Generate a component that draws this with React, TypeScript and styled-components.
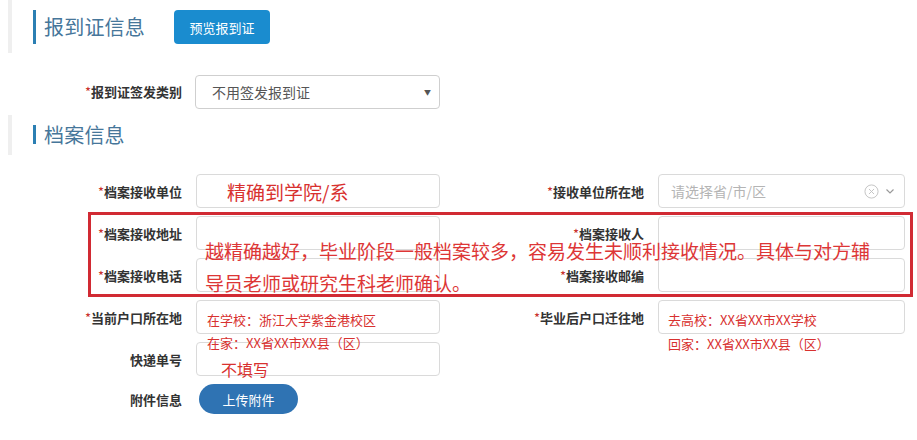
import React from "react";
import styled, { createGlobalStyle } from "styled-components";

const GlobalStyle = createGlobalStyle`
  html, body { margin: 0; padding: 0; background: #fff; }
  * { box-sizing: border-box; }
`;

const FONT = `"Noto Sans CJK SC", "Noto Sans", "Liberation Sans", sans-serif`;

const Page = styled.div`
  width: 917px;
  height: 440px;
  overflow: hidden;
  background: #fff;
  font-family: ${FONT};
  position: relative;
`;

const SectionHeader = styled.div<{ $pt: number; $pb: number; $mt?: number }>`
  margin-left: 8px;
  margin-top: ${(p) => p.$mt ?? 0}px;
  border-left: 4px solid #efefef;
  padding: ${(p) => p.$pt}px 0 ${(p) => p.$pb}px 21px;
`;

const TitleBar = styled.div<{ $h: number }>`
  display: flex;
  align-items: center;
  height: ${(p) => p.$h}px;
  border-left: 3px solid #2b7fb3;
  padding-left: 8px;
  gap: 29px;
`;

const Title = styled.h2`
  margin: 0;
  font-size: 20px;
  line-height: 20px;
  font-weight: 400;
  color: #46769a;
  letter-spacing: 0.2px;
`;

const PrimaryButton = styled.button`
  width: 96px;
  height: 34px;
  border: none;
  border-radius: 4px;
  background: #1a8ccf;
  color: #fff;
  font-family: ${FONT};
  font-size: 13px;
  padding: 0;
`;

const Row = styled.div<{ $mt: number; $h?: number }>`
  display: flex;
  align-items: center;
  height: ${(p) => p.$h ?? 34}px;
  margin-top: ${(p) => p.$mt}px;
`;

const Field = styled.div`
  display: flex;
  align-items: center;
  height: 100%;
`;

const Label = styled.label<{ $w: number }>`
  width: ${(p) => p.$w}px;
  flex-shrink: 0;
  text-align: right;
  font-size: 13px;
  font-weight: 700;
  color: #333;
  white-space: nowrap;
`;

const Star = styled.span`
  color: #c9302c;
  font-weight: 400;
`;

const InputBox = styled.div<{ $w: number; $ml: number }>`
  position: relative;
  width: ${(p) => p.$w}px;
  height: 34px;
  margin-left: ${(p) => p.$ml}px;
  border: 1px solid #dadada;
  border-radius: 4px;
  background: #fff;
  display: flex;
  align-items: center;
  padding: 0 12px;
`;

const SelectBox = styled(InputBox)`
  border-color: #cfcfcf;
  padding: 0 8px 0 16px;
  justify-content: space-between;
  font-size: 14px;
  color: #555;
`;

const Caret = styled.span`
  font-size: 7px;
  color: #555;
`;

const Placeholder = styled.span`
  font-size: 14px;
  color: #b4b4b4;
  flex: 1;
`;

const IconGroup = styled.div`
  display: flex;
  align-items: center;
  gap: 6px;
  margin-right: -3px;
`;

const NoteText = styled.span<{ $size: number }>`
  font-size: ${(p) => p.$size}px;
  color: #d8312f;
  white-space: nowrap;
  line-height: 1;
`;

const BelowNote = styled(NoteText)<{ $left: number; $top: number }>`
  position: absolute;
  left: ${(p) => p.$left}px;
  top: ${(p) => p.$top}px;
  z-index: 3;
`;

const Form = styled.div`
  position: relative;
`;

const AnnotationBox = styled.div`
  position: absolute;
  left: 88px;
  top: 38px;
  width: 825px;
  height: 85px;
  border: 3px solid #d12a33;
  pointer-events: none;
  z-index: 4;
`;

const AnnotationText = styled.div`
  position: absolute;
  left: 205px;
  top: 61px;
  font-size: 19px;
  line-height: 32px;
  color: #dd3636;
  white-space: nowrap;
  pointer-events: none;
  z-index: 4;
`;

const UploadButton = styled.button`
  width: 99px;
  height: 30px;
  margin-left: 17px;
  border: none;
  border-radius: 15px;
  background: #2f73b3;
  color: #fff;
  font-family: ${FONT};
  font-size: 13px;
  padding: 0;
`;

const LEFT_LABEL = 182;
const LEFT_GAP = 14;
const LEFT_W = 244;
const RIGHT_LABEL = 204;
const RIGHT_GAP = 14;
const RIGHT_W = 247;

const Req: React.FC<{ text: string; req?: boolean }> = ({ text, req = true }) => (
  <>
    {req && <Star>*</Star>}
    {text}
  </>
);

const LeftField: React.FC<{ label: string; req?: boolean; children?: React.ReactNode }> = ({
  label,
  req,
  children,
}) => (
  <Field>
    <Label $w={LEFT_LABEL}>
      <Req text={label} req={req} />
    </Label>
    <InputBox $w={LEFT_W} $ml={LEFT_GAP}>{children}</InputBox>
  </Field>
);

const RightField: React.FC<{ label: string; req?: boolean; children?: React.ReactNode }> = ({
  label,
  req,
  children,
}) => (
  <Field>
    <Label $w={RIGHT_LABEL}>
      <Req text={label} req={req} />
    </Label>
    <InputBox $w={RIGHT_W} $ml={RIGHT_GAP}>{children}</InputBox>
  </Field>
);

const ClearIcon = () => (
  <svg width="15" height="15" viewBox="0 0 16 16" fill="none" stroke="#c2c2c2" strokeWidth="1">
    <circle cx="8" cy="8" r="7" />
    <path d="M5.3 5.3 L10.7 10.7 M10.7 5.3 L5.3 10.7" />
  </svg>
);

const ChevronIcon = () => (
  <svg width="10" height="10" viewBox="0 0 10 10" fill="none" stroke="#9a9a9a" strokeWidth="1.2">
    <path d="M1.5 3.5 L5 7 L8.5 3.5" />
  </svg>
);

export default function App() {
  return (
    <>
      <GlobalStyle />
      <Page>
        <SectionHeader $pt={10} $pb={9}>
          <TitleBar $h={34}>
            <Title>报到证信息</Title>
            <PrimaryButton>预览报到证</PrimaryButton>
          </TitleBar>
        </SectionHeader>

        <Row $mt={22} $h={33}>
          <Field>
            <Label $w={LEFT_LABEL}>
              <Req text="报到证签发类别" />
            </Label>
            <SelectBox $w={245} $ml={13}>
              <span>不用签发报到证</span>
              <Caret>▼</Caret>
            </SelectBox>
          </Field>
        </Row>

        <SectionHeader $pt={10} $pb={11} $mt={7}>
          <TitleBar $h={19}>
            <Title>档案信息</Title>
          </TitleBar>
        </SectionHeader>

        <Form>
          <Row $mt={19}>
            <LeftField label="档案接收单位">
              <NoteText $size={19} style={{ marginLeft: 18 }}>精确到学院/系</NoteText>
            </LeftField>
            <RightField label="接收单位所在地">
              <Placeholder>请选择省/市/区</Placeholder>
              <IconGroup>
                <ClearIcon />
                <ChevronIcon />
              </IconGroup>
            </RightField>
          </Row>
          <Row $mt={8}>
            <LeftField label="档案接收地址" />
            <RightField label="档案接收人" />
          </Row>
          <Row $mt={8}>
            <LeftField label="档案接收电话" />
            <RightField label="档案接收邮编" />
          </Row>
          <Row $mt={8}>
            <LeftField label="当前户口所在地">
              <NoteText $size={13} style={{ marginLeft: -2, marginTop: 4 }}>
                在学校：浙江大学紫金港校区
              </NoteText>
              <BelowNote $size={13} $left={10} $top={35}>
                在家：XX省XX市XX县（区）
              </BelowNote>
            </LeftField>
            <RightField label="毕业后户口迁往地">
              <NoteText $size={13} style={{ marginLeft: -3, marginTop: 4 }}>
                去高校：XX省XX市XX学校
              </NoteText>
              <BelowNote $size={13} $left={9} $top={36}>
                回家：XX省XX市XX县（区）
              </BelowNote>
            </RightField>
          </Row>
          <Row $mt={8}>
            <LeftField label="快递单号" req={false}>
              <BelowNote $size={16} $left={24} $top={18}>
                不填写
              </BelowNote>
            </LeftField>
          </Row>
          <Row $mt={8} $h={30}>
            <Field>
              <Label $w={LEFT_LABEL}>附件信息</Label>
              <UploadButton>上传附件</UploadButton>
            </Field>
          </Row>

          <AnnotationBox />
          <AnnotationText>
            越精确越好，毕业阶段一般档案较多，容易发生未顺利接收情况。具体与对方辅
            <br />
            导员老师或研究生科老师确认。
          </AnnotationText>
        </Form>
      </Page>
    </>
  );
}
